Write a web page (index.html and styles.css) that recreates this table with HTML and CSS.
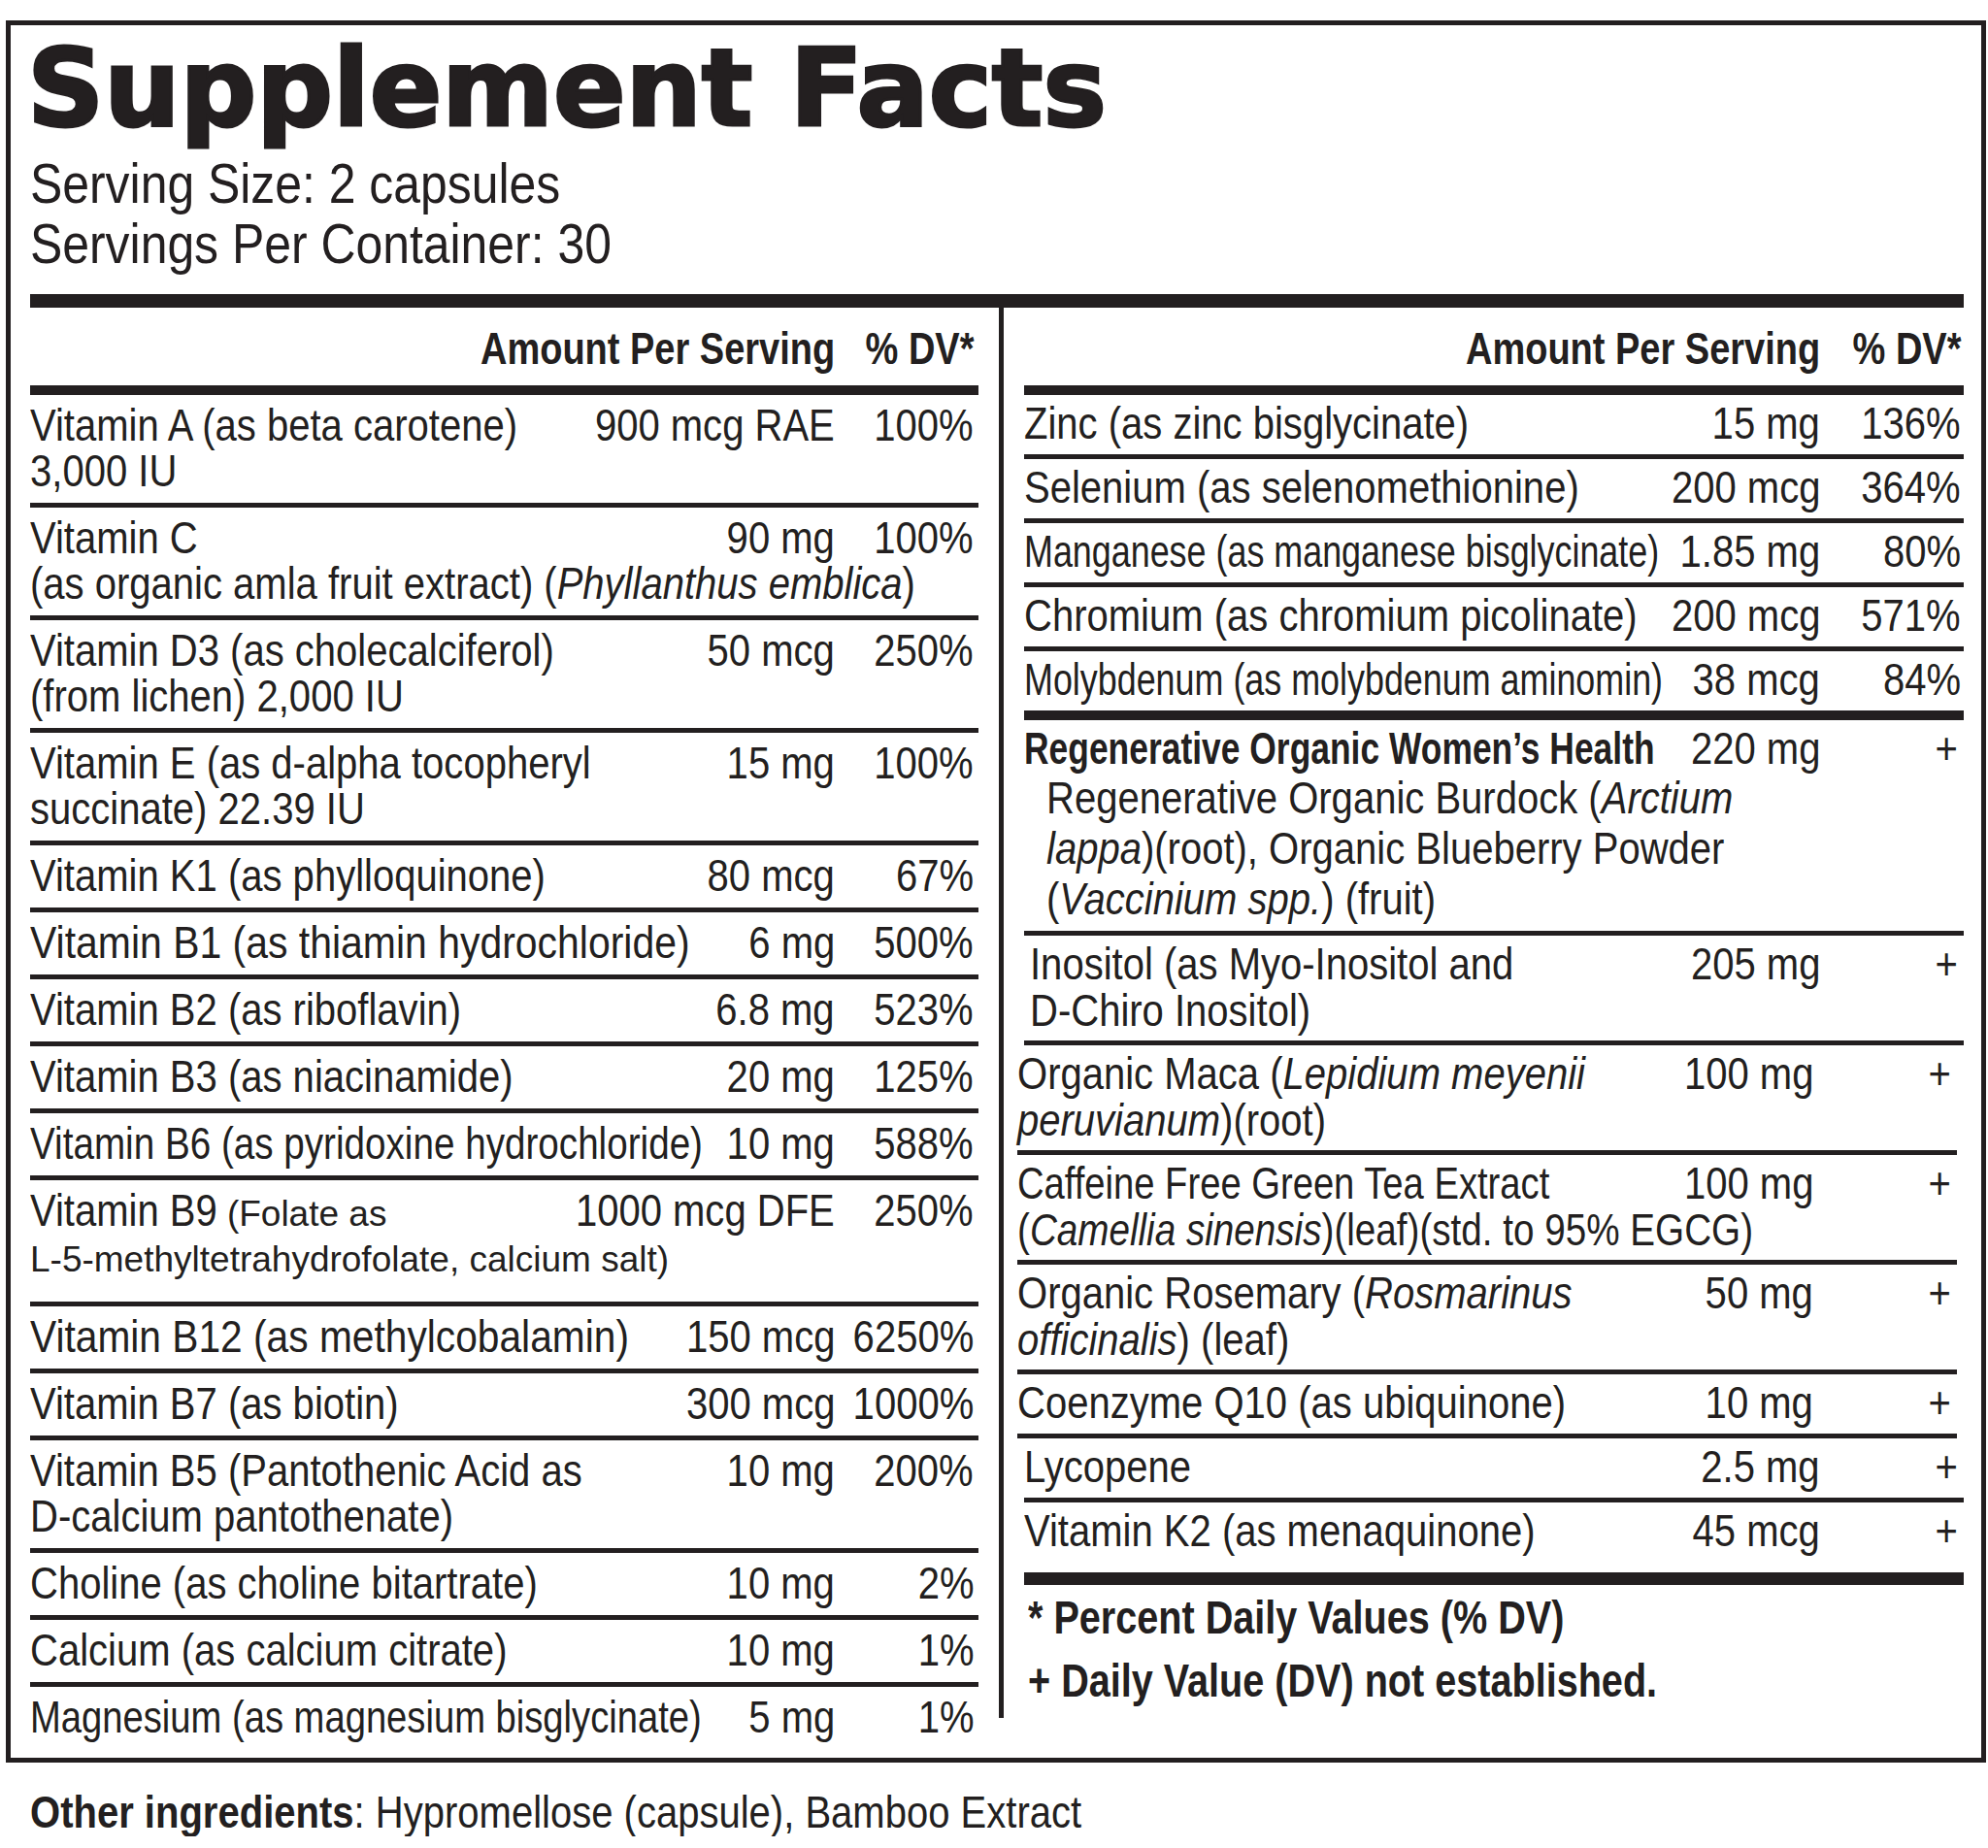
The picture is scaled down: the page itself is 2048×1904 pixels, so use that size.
FILE: index.html
```html
<!DOCTYPE html>
<html lang="en">
<head>
<meta charset="utf-8">
<title>Supplement Facts</title>
<link rel="stylesheet" href="styles.css">
</head>
<body>
<div class="label">
  <h1 class="title">Supplement Facts</h1>
  <div class="serving">
    <div><span class="t">Serving Size: 2 capsules</span></div>
    <div><span class="t">Servings Per Container: 30</span></div>
  </div>
  <div class="bar-top"></div>
  <div class="cols">
    <div class="col col-left">
      <div class="head"><span></span><span class="amt"><span class="t">Amount Per Serving</span></span><span class="dv"><span class="t">% DV*</span></span></div>

      <div class="row">
        <div class="line"><span class="name"><span class="t">Vitamin A (as beta carotene)</span></span><span class="amt"><span class="t">900 mcg RAE</span></span><span class="dv"><span class="t">100%</span></span></div>
        <div class="cont"><span class="t">3,000 IU</span></div>
      </div>
      <div class="row">
        <div class="line"><span class="name"><span class="t">Vitamin C</span></span><span class="amt"><span class="t">90 mg</span></span><span class="dv"><span class="t">100%</span></span></div>
        <div class="cont"><span class="t">(as organic amla fruit extract) (<i>Phyllanthus emblica</i>)</span></div>
      </div>
      <div class="row">
        <div class="line"><span class="name"><span class="t">Vitamin D3 (as cholecalciferol)</span></span><span class="amt"><span class="t">50 mcg</span></span><span class="dv"><span class="t">250%</span></span></div>
        <div class="cont"><span class="t">(from lichen) 2,000 IU</span></div>
      </div>
      <div class="row">
        <div class="line"><span class="name"><span class="t">Vitamin E (as d-alpha tocopheryl</span></span><span class="amt"><span class="t">15 mg</span></span><span class="dv"><span class="t">100%</span></span></div>
        <div class="cont"><span class="t">succinate) 22.39 IU</span></div>
      </div>
      <div class="row">
        <div class="line"><span class="name"><span class="t">Vitamin K1 (as phylloquinone)</span></span><span class="amt"><span class="t">80 mcg</span></span><span class="dv"><span class="t">67%</span></span></div>
      </div>
      <div class="row">
        <div class="line"><span class="name"><span class="t sx89">Vitamin B1 (as thiamin hydrochloride)</span></span><span class="amt"><span class="t">6 mg</span></span><span class="dv"><span class="t">500%</span></span></div>
      </div>
      <div class="row">
        <div class="line"><span class="name"><span class="t">Vitamin B2 (as riboflavin)</span></span><span class="amt"><span class="t">6.8 mg</span></span><span class="dv"><span class="t">523%</span></span></div>
      </div>
      <div class="row">
        <div class="line"><span class="name"><span class="t">Vitamin B3 (as niacinamide)</span></span><span class="amt"><span class="t">20 mg</span></span><span class="dv"><span class="t">125%</span></span></div>
      </div>
      <div class="row">
        <div class="line"><span class="name"><span class="t sx84">Vitamin B6 (as pyridoxine hydrochloride)</span></span><span class="amt"><span class="t">10 mg</span></span><span class="dv"><span class="t">588%</span></span></div>
      </div>
      <div class="row folate">
        <div class="line"><span class="name"><span class="t b9">Vitamin B9</span><span class="small"> (Folate as</span></span><span class="amt"><span class="t">1000 mcg DFE</span></span><span class="dv"><span class="t">250%</span></span></div>
        <div class="cont small">L-5-methyltetrahydrofolate, calcium salt)</div>
      </div>
      <div class="row">
        <div class="line"><span class="name"><span class="t sx88">Vitamin B12 (as methylcobalamin)</span></span><span class="amt"><span class="t">150 mcg</span></span><span class="dv"><span class="t">6250%</span></span></div>
      </div>
      <div class="row">
        <div class="line"><span class="name"><span class="t">Vitamin B7 (as biotin)</span></span><span class="amt"><span class="t">300 mcg</span></span><span class="dv"><span class="t">1000%</span></span></div>
      </div>
      <div class="row">
        <div class="line"><span class="name"><span class="t">Vitamin B5 (Pantothenic Acid as</span></span><span class="amt"><span class="t">10 mg</span></span><span class="dv"><span class="t">200%</span></span></div>
        <div class="cont"><span class="t">D-calcium pantothenate)</span></div>
      </div>
      <div class="row">
        <div class="line"><span class="name"><span class="t">Choline (as choline bitartrate)</span></span><span class="amt"><span class="t">10 mg</span></span><span class="dv"><span class="t">2%</span></span></div>
      </div>
      <div class="row">
        <div class="line"><span class="name"><span class="t">Calcium (as calcium citrate)</span></span><span class="amt"><span class="t">10 mg</span></span><span class="dv"><span class="t">1%</span></span></div>
      </div>
      <div class="row">
        <div class="line"><span class="name"><span class="t sx83">Magnesium (as magnesium bisglycinate)</span></span><span class="amt"><span class="t">5 mg</span></span><span class="dv"><span class="t">1%</span></span></div>
      </div>
    </div>

    <div class="col col-right">
      <div class="head"><span></span><span class="amt"><span class="t">Amount Per Serving</span></span><span class="dv"><span class="t">% DV*</span></span></div>

      <div class="row">
        <div class="line"><span class="name"><span class="t">Zinc (as zinc bisglycinate)</span></span><span class="amt"><span class="t">15 mg</span></span><span class="dv"><span class="t">136%</span></span></div>
      </div>
      <div class="row">
        <div class="line"><span class="name"><span class="t">Selenium (as selenomethionine)</span></span><span class="amt"><span class="t">200 mcg</span></span><span class="dv"><span class="t">364%</span></span></div>
      </div>
      <div class="row">
        <div class="line"><span class="name"><span class="t sx78">Manganese (as manganese bisglycinate)</span></span><span class="amt"><span class="t">1.85 mg</span></span><span class="dv"><span class="t">80%</span></span></div>
      </div>
      <div class="row">
        <div class="line"><span class="name"><span class="t">Chromium (as chromium picolinate)</span></span><span class="amt"><span class="t">200 mcg</span></span><span class="dv"><span class="t">571%</span></span></div>
      </div>
      <div class="row thick">
        <div class="line"><span class="name"><span class="t sx78">Molybdenum (as molybdenum aminomin)</span></span><span class="amt"><span class="t">38 mcg</span></span><span class="dv"><span class="t">84%</span></span></div>
      </div>
      <div class="row">
        <div class="line"><span class="name"><b class="t sx77">Regenerative Organic Women’s Health</b></span><span class="amt"><span class="t">220 mg</span></span><span class="dv plus"><span class="t">+</span></span></div>
        <div class="sub"><span class="t">Regenerative Organic Burdock (<i>Arctium</i></span></div>
        <div class="sub"><span class="t"><i>lappa</i>)(root), Organic Blueberry Powder</span></div>
        <div class="sub"><span class="t">(<i>Vaccinium spp.</i>) (fruit)</span></div>
      </div>
      <div class="row nudge">
        <div class="line"><span class="name"><span class="t">Inositol (as Myo-Inositol and</span></span><span class="amt"><span class="t">205 mg</span></span><span class="dv plus"><span class="t">+</span></span></div>
        <div class="cont"><span class="t">D-Chiro Inositol)</span></div>
      </div>
      <div class="row shift">
        <div class="line"><span class="name"><span class="t">Organic Maca (<i>Lepidium meyenii</i></span></span><span class="amt"><span class="t">100 mg</span></span><span class="dv plus"><span class="t">+</span></span></div>
        <div class="cont"><span class="t"><i>peruvianum</i>)(root)</span></div>
      </div>
      <div class="row shift">
        <div class="line"><span class="name"><span class="t sx83">Caffeine Free Green Tea Extract</span></span><span class="amt"><span class="t">100 mg</span></span><span class="dv plus"><span class="t">+</span></span></div>
        <div class="cont"><span class="t sx84">(<i>Camellia sinensis</i>)(leaf)(std. to 95% EGCG)</span></div>
      </div>
      <div class="row shift">
        <div class="line"><span class="name"><span class="t">Organic Rosemary (<i>Rosmarinus</i></span></span><span class="amt"><span class="t">50 mg</span></span><span class="dv plus"><span class="t">+</span></span></div>
        <div class="cont"><span class="t"><i>officinalis</i>) (leaf)</span></div>
      </div>
      <div class="row shift">
        <div class="line"><span class="name"><span class="t">Coenzyme Q10 (as ubiquinone)</span></span><span class="amt"><span class="t">10 mg</span></span><span class="dv plus"><span class="t">+</span></span></div>
      </div>
      <div class="row">
        <div class="line"><span class="name"><span class="t">Lycopene</span></span><span class="amt"><span class="t">2.5 mg</span></span><span class="dv plus"><span class="t">+</span></span></div>
      </div>
      <div class="row last">
        <div class="line"><span class="name"><span class="t">Vitamin K2 (as menaquinone)</span></span><span class="amt"><span class="t">45 mcg</span></span><span class="dv plus"><span class="t">+</span></span></div>
      </div>

      <div class="notes">
        <p><span class="t">* Percent Daily Values (% DV)</span></p>
        <p><span class="t">+ Daily Value (DV) not established.</span></p>
      </div>
    </div>
  </div>
</div>
<p class="other"><span class="t"><b>Other ingredients</b>: Hypromellose (capsule), Bamboo Extract</span></p>
</body>
</html>
```

FILE: styles.css
```css
* {
  box-sizing: border-box;
  margin: 0;
  padding: 0;
}

html, body {
  background: #ffffff;
}

body {
  color: #231f20;
  font-family: "Liberation Sans", Arial, sans-serif;
  font-size: 46px;
}

/* horizontally condensed text run (stands in for Helvetica Condensed) */
.t {
  display: inline-block;
  white-space: nowrap;
  transform: scaleX(var(--sx, 0.87));
  transform-origin: left center;
}

.amt .t,
.dv .t {
  transform-origin: right center;
}

.sx89 { --sx: 0.89; }
.sx88 { --sx: 0.885; }
.sx84 { --sx: 0.84; }
.sx83 { --sx: 0.83; }
.sx78 { --sx: 0.78; }
.sx77 { --sx: 0.77; }

.label {
  width: 2040px;
  margin: 21px 0 0 6px;
  border: 5px solid #231f20;
  padding: 11px 18px 0 20px;
}

.title {
  font-family: "DejaVu Sans", sans-serif;
  font-weight: 700;
  font-size: 110px;
  line-height: 108px;
  margin-left: -3px;
  white-space: nowrap;
  -webkit-text-stroke: 3px #231f20;
}

.serving {
  margin-top: 13px;
  font-size: 58px;
  line-height: 62px;
}

.serving .t {
  --sx: 0.86;
}

.bar-top {
  margin-top: 21px;
  height: 14px;
  background: #231f20;
}

.cols {
  display: flex;
  align-items: flex-start;
}

.col-left {
  width: 977px;
  flex: none;
}

.col-right {
  flex: 1;
  min-width: 0;
  margin-left: 21px;
  border-left: 5px solid #231f20;
  padding-left: 21px;
}

.head,
.line {
  display: grid;
  white-space: nowrap;
}

.col-left .head,
.col-left .line {
  grid-template-columns: minmax(0, 1fr) auto 143px;
}

.col-right .head,
.col-right .line {
  grid-template-columns: minmax(0, 1fr) auto 145px;
}

.head {
  font-weight: 700;
  line-height: 50px;
  padding-top: 17px;
  padding-bottom: 13px;
  border-bottom: 10px solid #231f20;
}

.head .t {
  --sx: 0.826;
}

.col-left .head {
  padding-right: 5px;
}

.col-right .head {
  padding-right: 3px;
}

.amt,
.dv {
  text-align: right;
}

.name {
  min-width: 0;
}

/* left column rows */
.col-left .row {
  padding: 8px 5px 9px 0;
  border-bottom: 5px solid #231f20;
}

.col-left .row:last-child {
  border-bottom: 0;
  padding-bottom: 18px;
}

.col-left .line,
.col-left .cont {
  line-height: 47px;
}

.col-left .folate {
  padding-bottom: 20px;
}

.small {
  font-size: 37px;
}

.b9 {
  margin-right: -29px;
}

.cont {
  white-space: nowrap;
}

/* right column rows */
.col-right .row {
  padding: 4px 3px 7px 0;
  border-bottom: 5px solid #231f20;
}

.col-right .line {
  line-height: 50px;
}

.col-right .cont {
  line-height: 47px;
}

.col-right .row.thick {
  border-bottom-width: 10px;
}

.col-right .row.last {
  padding-bottom: 18px;
  border-bottom-width: 13px;
}

.sub {
  padding-left: 23px;
  line-height: 52px;
  white-space: nowrap;
}

.nudge .name,
.nudge .cont {
  padding-left: 6px;
}

.shift {
  margin-left: -7px;
  margin-right: 7px;
}

.plus {
  padding-right: 3px;
}

.notes {
  padding: 1px 0 6px 4px;
  font-weight: 700;
  font-size: 48px;
  line-height: 65px;
}

.notes .t {
  --sx: 0.825;
}

.other {
  margin: 26px 0 0 31px;
  line-height: 50px;
}
```
